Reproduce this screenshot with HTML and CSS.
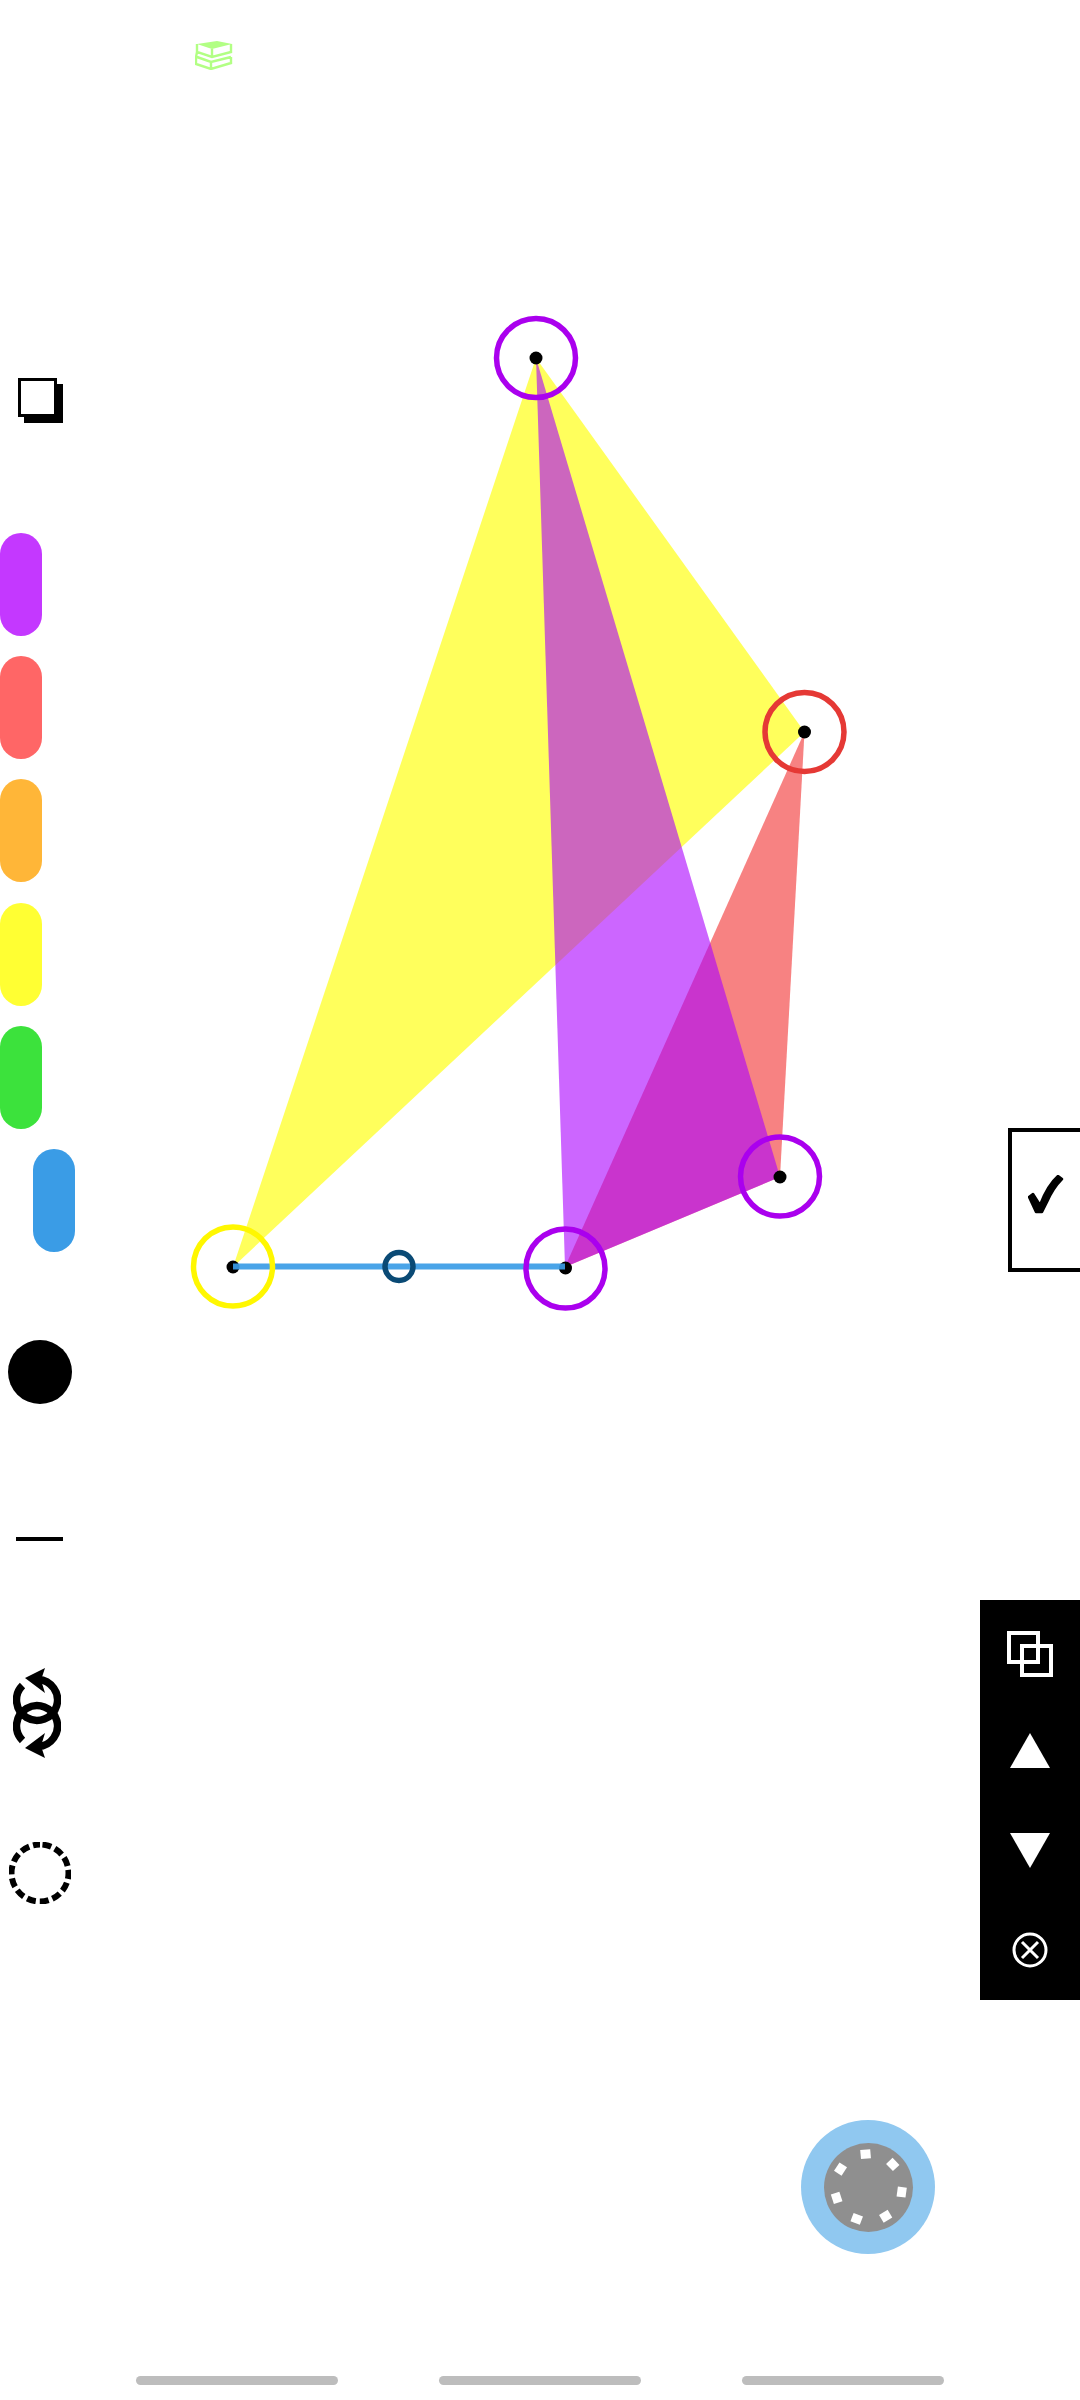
FILE: index.html
```html
<!DOCTYPE html>
<html lang="en">
<head>
  <meta charset="UTF-8">
  <title>Shape Editor</title>
  <link rel="stylesheet" href="styles.css">
</head>
<body>
  <div class="app">
    <!-- diagram: node positions are the content -->
    <svg class="canvas" width="1080" height="2400" viewBox="0 0 1080 2400">
      <polygon class="tri-yellow" points="536,358 804.5,732 233,1267"/>
      <polygon class="tri-red" points="804.5,732 780,1177 565,1267"/>
      <polygon class="tri-purple" points="536,358 780,1177 565,1267"/>
      <circle class="dot" cx="536" cy="358" r="6.5"/>
      <circle class="dot" cx="804.5" cy="732" r="6.5"/>
      <circle class="dot" cx="780" cy="1177" r="6.5"/>
      <circle class="dot" cx="233" cy="1267" r="6.5"/>
      <circle class="dot" cx="565.5" cy="1268" r="6.5"/>
      <line class="edge" x1="233" y1="1266.5" x2="565" y2="1266.5"/>
      <circle class="ring ring-purple" cx="536" cy="358" r="39.5"/>
      <circle class="ring ring-red" cx="804.5" cy="732" r="39.5"/>
      <circle class="ring ring-purple" cx="780" cy="1176.5" r="39.5"/>
      <circle class="ring ring-yellow" cx="233" cy="1266.5" r="39.5"/>
      <circle class="ring ring-purple" cx="565.5" cy="1268.5" r="39.5"/>
      <circle class="ring mid-ring" cx="399" cy="1266.5" r="14"/>
    </svg>

    <header class="header">
      <svg class="logo" width="38" height="29" viewBox="0 0 38 29">
        <polygon class="logo-top" points="2,3 22,0 37,3 17,8"/>
        <path class="logo-line" d="M2 3V11L17 16L36 11V3M17 8V16M2 11L1 16V23L16 28L36 22V16M2 16L16 21L36 16M16 21V28"/>
      </svg>
    </header>

    <main class="main">
      <aside class="toolbar">
        <div class="stack-icon"></div>
        <div class="swatches">
          <div class="swatch swatch-purple"></div>
          <div class="swatch swatch-red"></div>
          <div class="swatch swatch-orange"></div>
          <div class="swatch swatch-yellow"></div>
          <div class="swatch swatch-green"></div>
          <div class="swatch swatch-blue"></div>
        </div>
        <div class="fill-dot"></div>
        <div class="stroke-line"></div>
        <svg class="swap-icon" width="48" height="90" viewBox="0 0 48 90">
          <g>
            <path class="swap-arc" d="M25 11.5A20.5 20.5 0 1 1 9.5 17.5"/>
            <polygon points="12,10 32,0 28,12 32,25"/>
          </g>
          <g transform="matrix(1 0 0 -1 0 90)">
            <path class="swap-arc" d="M25 11.5A20.5 20.5 0 1 1 9.5 17.5"/>
            <polygon points="12,10 32,0 28,12 32,25"/>
          </g>
        </svg>
        <svg class="dash-icon" width="62" height="62" viewBox="0 0 62 62">
          <circle class="dash-ring" cx="31" cy="31" r="28.5" transform="rotate(-90 31 31)"/>
        </svg>
      </aside>

      <aside class="side-actions">
        <div class="check-box">
          <svg class="check-icon" width="36" height="39" viewBox="0 0 36 39">
            <path d="M1 22L5 19L12 30C15 22 21 9 30 1L34 4C27 11 22 20 19 27L14 37H8Z"/>
          </svg>
        </div>
        <div class="layer-panel">
          <div class="layer-btn layer-btn-first">
            <svg width="46" height="46" viewBox="0 0 46 46">
              <rect class="panel-line" x="2" y="2" width="29" height="29"/>
              <rect class="panel-line" x="15" y="15" width="29" height="29"/>
            </svg>
          </div>
          <div class="layer-btn">
            <svg width="40" height="35" viewBox="0 0 40 35"><polygon class="panel-fill" points="20,0 40,35 0,35"/></svg>
          </div>
          <div class="layer-btn">
            <svg width="40" height="35" viewBox="0 0 40 35"><polygon class="panel-fill" points="0,0 40,0 20,35"/></svg>
          </div>
          <div class="layer-btn">
            <svg width="36" height="36" viewBox="0 0 36 36">
              <circle class="panel-line thin" cx="18" cy="18" r="16"/>
              <path class="panel-line thin" d="M10 10L26 26M26 10L10 26"/>
            </svg>
          </div>
        </div>
        <div class="fab">
          <div class="fab-inner">
            <svg width="89" height="89" viewBox="-44.5 -44.5 89 89">
              <rect class="fab-tick" x="-5" y="-38" width="10" height="9" transform="rotate(-5)"/>
              <rect class="fab-tick" x="-5" y="-38" width="10" height="9" transform="rotate(46.4)"/>
              <rect class="fab-tick" x="-5" y="-38" width="10" height="9" transform="rotate(97.8)"/>
              <rect class="fab-tick" x="-5" y="-38" width="10" height="9" transform="rotate(149.2)"/>
              <rect class="fab-tick" x="-5" y="-38" width="10" height="9" transform="rotate(200.6)"/>
              <rect class="fab-tick" x="-5" y="-38" width="10" height="9" transform="rotate(252)"/>
              <rect class="fab-tick" x="-5" y="-38" width="10" height="9" transform="rotate(303.4)"/>
            </svg>
          </div>
        </div>
      </aside>
    </main>

    <nav class="tabs">
      <div class="tab"></div>
      <div class="tab"></div>
      <div class="tab"></div>
    </nav>
  </div>
</body>
</html>
```

FILE: styles.css
```css
body {
  margin: 0;
  background-color: #fff;
  font-family: "Liberation Sans", sans-serif;
}

.app {
  position: relative;
  width: 1080px;
  height: 2400px;
  overflow: hidden;
  display: flex;
  flex-direction: column;
}

/* diagram */
.canvas {
  position: absolute;
  top: 0;
  left: 0;
}

.tri-yellow { fill: #ffff00; fill-opacity: 0.64; }
.tri-red { fill: #f22f2f; fill-opacity: 0.6; }
.tri-purple { fill: #aa00ff; fill-opacity: 0.6; }

.dot { fill: #000; }

.edge {
  stroke: #3a9ce6;
  stroke-width: 6;
  stroke-opacity: 0.92;
}

.ring {
  fill: none;
  stroke-width: 5.5;
}

.ring-purple { stroke: #aa00ee; }
.ring-red { stroke: #e53935; }
.ring-yellow { stroke: #fff700; }
.mid-ring { stroke: #0a4a75; }

/* header */
.header {
  position: relative;
  height: 100px;
  box-sizing: border-box;
  padding: 41px 0 0 195px;
}

.logo { display: block; }
.logo-top { fill: #b2ff84; }

.logo-line {
  fill: none;
  stroke: #b2ff84;
  stroke-width: 2.4;
}

/* main row */
.main {
  position: relative;
  flex: 1;
  display: flex;
  justify-content: space-between;
}

.toolbar {
  display: flex;
  flex-direction: column;
  align-items: flex-start;
  padding-top: 278px;
}

.stack-icon {
  width: 39px;
  height: 39px;
  box-sizing: border-box;
  margin-left: 18px;
  margin-bottom: 116px;
  background-color: #fff;
  border: 3px solid #000;
  box-shadow: 6px 6px 0 #000;
}

.swatches {
  display: flex;
  flex-direction: column;
  gap: 20.2px;
  margin-bottom: 88px;
}

.swatch {
  width: 42px;
  height: 103px;
  border-radius: 21px;
}

.swatch-purple { background-color: #c438ff; }
.swatch-red { background-color: #ff6666; }
.swatch-orange { background-color: #ffb638; }
.swatch-yellow { background-color: #ffff33; }
.swatch-green { background-color: #3ce23c; }
.swatch-blue { background-color: #3a9ce6; margin-left: 33px; }

.fill-dot {
  width: 64px;
  height: 64px;
  margin-left: 8px;
  margin-bottom: 133px;
  border-radius: 50%;
  background-color: #000;
}

.stroke-line {
  width: 47px;
  height: 4px;
  margin-left: 16px;
  margin-bottom: 127px;
  background-color: #000;
}

.swap-icon {
  display: block;
  margin-left: 13px;
  margin-bottom: 84px;
}

.swap-arc {
  fill: none;
  stroke: #000;
  stroke-width: 7.5;
}

.dash-icon {
  display: block;
  margin-left: 9px;
}

.dash-ring {
  fill: none;
  stroke: #000;
  stroke-width: 6;
  stroke-dasharray: 9 4.02;
  stroke-dashoffset: -2.5;
}

/* right side */
.side-actions {
  display: flex;
  flex-direction: column;
  align-items: flex-end;
  padding-top: 1028px;
}

.check-box {
  width: 72px;
  height: 144px;
  box-sizing: border-box;
  display: flex;
  justify-content: center;
  align-items: center;
  padding-bottom: 12px;
  margin-bottom: 328px;
  background-color: #fff;
  border: 4px solid #000;
  border-right: none;
}

.check-icon path {
  stroke: #000;
  stroke-width: 2.5;
  stroke-linejoin: round;
}

.layer-panel {
  width: 100px;
  height: 400px;
  display: flex;
  flex-direction: column;
  margin-bottom: 120px;
  background-color: #000;
}

.layer-btn {
  height: 100px;
  display: flex;
  justify-content: center;
  align-items: center;
}

.layer-btn-first { padding-top: 8px; height: 92px; }

.panel-fill { fill: #fff; }

.panel-line {
  fill: none;
  stroke: #fff;
  stroke-width: 4;
}

.panel-line.thin { stroke-width: 3; }

.fab {
  width: 134px;
  height: 134px;
  margin-right: 145px;
  display: flex;
  justify-content: center;
  align-items: center;
  border-radius: 50%;
  background-color: #90c8f0;
}

.fab-inner {
  width: 89px;
  height: 89px;
  border-radius: 50%;
  background-color: #8f8f8f;
}

.fab-inner svg { display: block; }

.fab-tick { fill: #fff; }

/* bottom tabs */
.tabs {
  position: relative;
  display: flex;
  justify-content: center;
  gap: 101px;
  padding-bottom: 15px;
}

.tab {
  width: 202px;
  height: 9px;
  border-radius: 5px;
  background-color: #bdbdbd;
}
```
